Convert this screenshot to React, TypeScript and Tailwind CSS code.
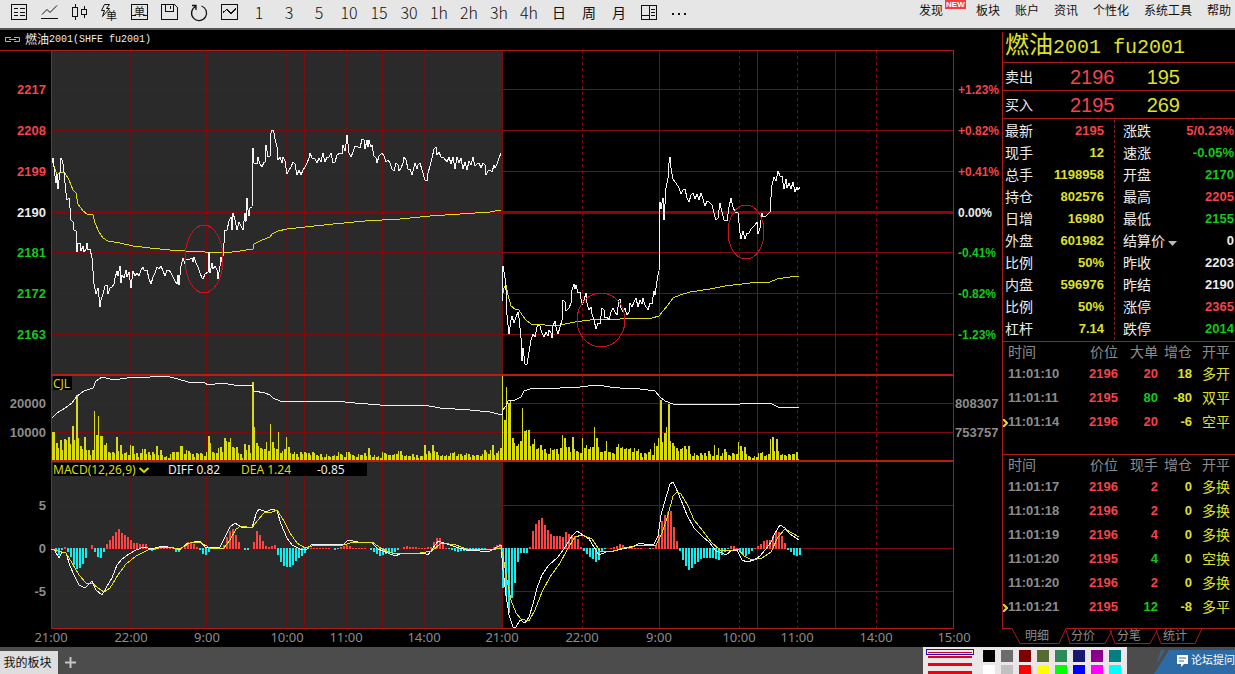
import { useState } from 'react'
import type { ReactNode } from 'react'

const SANS = "[font-family:'Liberation_Sans','Noto_Sans_CJK_SC',sans-serif]"
const SONG = "[font-family:'Liberation_Mono','Noto_Sans_CJK_SC',monospace]"
const UI = "[font-family:'Noto_Sans','Noto_Sans_CJK_SC',sans-serif]"
const NARROW = "[font-family:'Liberation_Sans_Narrow','Noto_Sans_CJK_SC',sans-serif]"

const RED = 'text-[#f5434b]'
const GREEN = 'text-[#12c91c]'
const YELLOW = 'text-[#dfe02c]'
const WHITE = 'text-[#ececec]'

type Stat = { label: string; value: string; color: string; menu?: boolean }
type Trade = { time: string; price: string; lots: string; lotsColor?: string; delta: string; kind: string; last?: boolean }

const leftStats: Stat[] = [
  { label: '最新', value: '2195', color: RED },
  { label: '现手', value: '12', color: YELLOW },
  { label: '总手', value: '1198958', color: YELLOW },
  { label: '持仓', value: '802576', color: YELLOW },
  { label: '日增', value: '16980', color: YELLOW },
  { label: '外盘', value: '601982', color: YELLOW },
  { label: '比例', value: '50%', color: YELLOW },
  { label: '内盘', value: '596976', color: YELLOW },
  { label: '比例', value: '50%', color: YELLOW },
  { label: '杠杆', value: '7.14', color: YELLOW },
]

const rightStats: Stat[] = [
  { label: '涨跌', value: '5/0.23%', color: RED },
  { label: '速涨', value: '-0.05%', color: GREEN },
  { label: '开盘', value: '2170', color: GREEN },
  { label: '最高', value: '2205', color: RED },
  { label: '最低', value: '2155', color: GREEN },
  { label: '结算价', value: '0', color: WHITE, menu: true },
  { label: '昨收', value: '2203', color: WHITE },
  { label: '昨结', value: '2190', color: WHITE },
  { label: '涨停', value: '2365', color: RED },
  { label: '跌停', value: '2014', color: GREEN },
]

const bigTrades: Trade[] = [
  { time: '11:01:10', price: '2196', lots: '20', delta: '18', kind: '多开' },
  { time: '11:01:11', price: '2195', lots: '80', lotsColor: GREEN, delta: '-80', kind: '双平' },
  { time: '11:01:14', price: '2196', lots: '20', delta: '-6', kind: '空平', last: true },
]

const trades: Trade[] = [
  { time: '11:01:17', price: '2196', lots: '2', delta: '0', kind: '多换' },
  { time: '11:01:18', price: '2196', lots: '2', delta: '0', kind: '多换' },
  { time: '11:01:19', price: '2196', lots: '4', delta: '0', kind: '多换' },
  { time: '11:01:20', price: '2195', lots: '4', lotsColor: GREEN, delta: '0', kind: '空换' },
  { time: '11:01:20', price: '2196', lots: '2', delta: '0', kind: '多换' },
  { time: '11:01:21', price: '2195', lots: '12', lotsColor: GREEN, delta: '-8', kind: '多平', last: true },
]

// Chart series, in the units of the chart's viewBox
const price1 =
  '52,163 53,158 54,167 55,176 56,183 57,174 58,189 59,180 60,173 61,158 62,160 63,164 64,172 65,183 66,193 67,200 69,198 70,208 71,220 73,222 74,230 76,231 77,252 78,243 80,243 81,251 83,246 84,252 86,249 87,243 88,250 90,249 92,258 93,271 94,284 96,294 98,288 99,297 100,307 101,300 103,294 105,286 107,285 108,294 110,288 112,287 114,284 115,278 117,271 118,276 120,266 121,283 122,275 124,278 126,270 127,277 129,272 130,280 131,288 133,271 135,276 137,273 139,276 141,270 143,267 144,270 147,270 149,279 151,284 153,277 155,273 157,267 159,269 161,266 163,271 165,276 167,270 169,270 171,273 173,277 175,281 177,284 178,275 179,285 181,266 183,258 185,264 186,260 190,259 192,258 193,262 194,257 196,263 198,267 200,273 202,278 203,279 205,274 208,272 209,252 210,273 212,263 213,269 215,266 217,270 218,279 220,266 221,257 222,262 223,256 224,243 225,230 227,230 229,221 231,217 232,230 233,213 235,220 237,230 239,222 240,224 243,230 245,213 246,222 247,198 248,210 249,216 250,208 252,207 253,148 254,163 257,164 258,157 260,164 262,167 264,162 265,162 266,145 268,157 270,156 271,133 272,130 273,130 274,133 275,139 277,147 278,160 280,157 282,163 283,157 285,161 287,174 289,170 291,167 293,162 295,164 297,175 299,170 301,175 303,170 305,167 307,163 309,158 310,153 312,158 315,159 317,163 319,158 321,162 323,153 325,162 327,157 329,157 331,153 333,163 335,162 337,155 340,153 342,154 343,145 345,151 346,144 347,135 349,153 351,157 353,152 355,146 358,147 360,148 362,139 364,140 365,149 367,140 368,147 369,140 371,147 372,145 374,156 376,158 377,163 379,156 382,153 384,156 386,162 388,160 390,163 392,169 394,171 396,163 398,165 399,171 401,168 403,163 404,157 406,160 408,169 410,169 412,175 414,167 415,163 417,169 418,165 420,163 422,170 425,180 427,181 428,173 430,166 432,158 434,149 436,147 437,155 439,152 441,157 444,158 447,162 449,157 451,164 453,157 455,169 457,157 459,163 461,158 463,169 465,162 467,170 469,161 471,165 473,157 475,166 477,164 479,163 481,168 483,163 485,165 486,175 488,171 490,170 492,172 494,165 495,168 497,164 499,158 501,153'
const price2 =
  '502,302 503,266 504,272 505,278 506,290 507,315 509,334 511,320 512,316 514,323 516,317 518,312 519,318 521,338 522,361 523,348 525,364 527,364 529,352 531,340 533,334 535,337 537,327 538,325 540,326 542,333 544,337 546,332 548,336 549,330 551,333 552,338 553,326 555,321 556,327 558,334 560,327 562,320 563,300 565,302 566,311 569,308 571,303 572,290 574,284 575,289 576,285 578,293 580,292 582,305 584,300 586,293 587,303 589,310 591,307 592,314 594,320 596,329 598,323 600,324 602,308 604,310 605,318 607,317 609,320 611,312 613,308 615,312 617,315 619,300 620,299 621,308 623,312 625,308 627,315 629,312 630,303 632,307 634,302 636,298 638,307 640,300 642,304 643,298 645,305 648,310 650,303 652,304 654,291 655,295 657,281 658,275 659,272 660,202 661,209 662,203 663,198 664,220 666,188 668,178 669,163 670,157 671,168 673,179 676,183 679,188 681,194 683,190 685,189 687,198 689,202 691,195 693,193 695,199 697,194 699,200 701,193 703,199 705,206 707,201 709,202 712,205 714,213 716,220 718,218 720,203 722,212 724,220 727,221 729,207 731,198 733,207 735,212 738,213 739,223 740,233 741,239 743,231 745,239 747,233 749,233 751,229 753,227 755,225 757,222 758,234 760,228 762,213 763,217 766,216 770,212 771,197 772,185 774,177 776,181 778,171 780,176 782,176 784,189 786,179 787,188 789,183 791,189 793,182 795,192 797,187 798,190 800,187'
const average1 =
  '52,160 53,163 57,175 61,172 65,173 69,180 73,190 76,193 78,204 83,211 87,214 93,215 95,223 99,232 103,238 108,241 120,243 133,246 150,248 170,250 185,251 205,252 225,253 240,251 253,249 254,244 262,240 270,237 272,234 278,231 287,229 305,227 333,224 365,221 400,219 430,216 460,214 490,212 501,210'
const average2 =
  '502,297 504,288 506,285 508,295 511,306 515,309 519,310 522,315 526,320 531,324 545,325 560,325 575,322 590,320 620,319 652,318 659,316 663,311 668,305 673,298 680,295 690,292 710,289 725,286 750,283 770,282 777,279 790,277 799,276'
const openInterest =
  '52,418 57,413 65,408 72,403 77,396 84,391 93,388 96,381 102,377 110,379 120,379 135,377 150,377 158,376 170,377 178,379 188,382 205,383 208,385 222,383 240,386 252,385 254,391 265,393 270,395 273,398 280,401 310,402 335,401 355,403 380,405 393,406 424,405 440,408 470,410 490,412 502,415 503,410 506,406 508,401 515,400 521,397 524,391 530,389 560,388 580,387 597,385 610,387 620,388 640,389 655,391 660,397 665,401 673,404 700,404 730,405 750,403 770,403 778,407 785,407 799,407'
const diff =
  '51,549 54,549 59,558 62,552 66,553 70,566 75,577 79,585 85,588 92,581 96,590 102,595 106,588 112,578 117,565 122,559 129,554 136,550 144,547 152,549 162,546 174,548 180,550 186,544 194,542 200,541 206,548 220,547 225,537 230,527 235,523 241,527 252,528 256,514 259,509 266,512 272,509 277,511 281,524 287,538 292,545 300,549 306,550 312,544 335,544 344,544 348,540 358,542 372,543 378,549 388,553 395,556 400,554 410,553 424,553 428,555 433,548 438,541 444,543 456,547 466,550 480,551 490,551 501,545 503,570 506,595 509,615 513,627 516,627 520,620 525,623 529,617 533,604 537,588 542,575 548,566 558,557 564,549 572,536 577,531 583,535 589,539 594,547 599,555 606,552 614,551 622,549 632,547 640,543 648,545 654,544 658,536 661,515 664,504 667,494 670,484 673,482 676,488 681,500 687,515 694,528 702,536 710,543 716,551 722,553 726,555 732,550 737,550 742,560 747,562 754,560 760,556 766,549 771,542 775,533 780,525 785,528 790,534 799,540'
const dea =
  '51,549 62,552 66,553 72,563 79,575 86,583 92,583 98,588 104,592 110,588 118,575 126,564 136,556 148,550 165,547 180,549 190,543 200,542 210,548 224,548 230,540 236,529 241,526 252,528 258,520 264,513 272,512 277,510 284,521 290,533 297,543 305,548 312,546 322,545 340,546 350,543 372,542 382,549 392,553 404,554 420,553 432,551 441,543 456,545 466,549 490,550 501,548 503,556 507,580 511,600 516,613 521,619 529,621 535,610 542,592 550,577 560,563 567,550 575,537 582,535 592,539 600,551 610,552 624,548 640,545 656,545 662,533 668,515 673,496 677,492 681,494 688,506 694,520 703,531 711,542 720,550 728,551 738,549 744,556 752,560 762,558 771,552 778,537 785,529 792,533 799,537'

// One bar every two units, first bar at x = 52
const volume = [
  28, 28, 17, 12, 20, 10, 21, 20, 23, 16, 34, 20, 65, 22, 14, 11, 23, 10, 10, 5, 10, 49, 25, 44, 24, 24, 15, 17, 8, 7, 8, 7,
  23, 9, 15, 6, 7, 8, 5, 15, 14, 6, 7, 3, 7, 11, 11, 6, 8, 5, 8, 6, 14, 5, 10, 5, 3, 4, 2, 6, 8, 8, 8, 8, 14, 14, 6, 10, 9,
  7, 6, 3, 7, 6, 7, 6, 4, 8, 24, 17, 8, 7, 7, 12, 13, 8, 22, 19, 18, 22, 13, 12, 13, 7, 6, 2, 16, 10, 15, 7, 78, 33, 17, 14,
  12, 11, 11, 18, 9, 36, 18, 12, 11, 28, 7, 9, 11, 23, 13, 7, 6, 8, 6, 3, 8, 6, 8, 7, 7, 5, 8, 7, 5, 4, 6, 3, 3, 6, 4, 3, 4,
  5, 4, 8, 6, 5, 3, 8, 8, 6, 5, 4, 3, 6, 5, 5, 7, 4, 12, 5, 3, 5, 3, 4, 2, 8, 7, 6, 5, 5, 5, 6, 6, 9, 9, 5, 4, 5, 4, 4, 6,
  3, 5, 2, 4, 4, 15, 6, 9, 7, 15, 9, 8, 5, 4, 5, 4, 5, 4, 7, 7, 8, 4, 6, 6, 4, 5, 7, 6, 3, 5, 4, 5, 5, 4, 6, 10, 8, 6, 10,
  15, 5, 7, 9, 12, 84, 40, 73, 57, 60, 22, 17, 14, 16, 19, 52, 29, 30, 30, 14, 16, 21, 11, 12, 15, 10, 11, 7, 6, 12, 10, 11,
  11, 6, 12, 25, 22, 13, 13, 8, 23, 11, 9, 8, 7, 22, 12, 15, 11, 13, 13, 33, 22, 13, 8, 8, 9, 19, 8, 8, 7, 6, 13, 16, 12, 13,
  11, 12, 11, 12, 8, 12, 9, 11, 7, 3, 7, 6, 8, 11, 5, 17, 14, 22, 60, 18, 27, 33, 56, 19, 17, 14, 12, 9, 11, 12, 14, 11, 14,
  6, 4, 7, 5, 4, 7, 5, 7, 4, 9, 6, 4, 15, 5, 12, 4, 7, 11, 8, 5, 4, 7, 6, 6, 18, 14, 9, 13, 6, 4, 3, 2, 4, 3, 7, 7, 8, 4, 5,
  6, 21, 23, 9, 21, 9, 5, 6, 5, 4, 6, 5, 6, 6, 8, 1,
]

const macdShape: [number, number][] = [
  [52, 0], [57, -7], [60, -8], [62, 3], [64, 2], [66, -3], [70, -9], [73, -17], [77, -22], [81, -18], [86, -8], [88, 0],
  [91, 4], [93, 0], [95, -8], [99, -11], [102, -8], [104, 0], [106, 5], [111, 12], [118, 20], [122, 15], [128, 11],
  [132, 6], [140, 5], [146, 5], [148, 0], [151, -3], [155, -2], [160, 2], [172, 1], [175, -4], [179, -4], [182, 2],
  [187, 7], [192, 6], [196, 2], [199, -2], [203, -8], [207, -6], [210, 0], [222, 1], [225, 10], [229, 18], [232, 20],
  [236, 12], [239, 4], [242, -2], [247, -2], [252, 2], [255, 16], [257, 19], [260, 12], [264, 3], [270, 2], [274, 4],
  [276, -2], [278, -12], [283, -18], [288, -20], [292, -17], [297, -10], [302, -8], [306, -2], [310, 1], [330, 1],
  [335, -3], [340, 2], [347, 4], [352, 1], [365, 1], [372, -3], [378, -8], [384, -6], [395, -4], [400, 0], [405, 3],
  [420, 1], [430, 2], [434, 8], [437, 12], [441, 9], [444, 2], [450, -2], [456, -4], [470, -2], [480, -1], [490, 0],
  [495, 3], [501, 6], [502, -40], [505, -48], [508, -65], [511, -50], [514, -35], [516, -18], [519, -5], [526, -5],
  [529, 2], [532, 18], [536, 27], [541, 31], [545, 22], [551, 13], [558, 13], [562, 12], [565, 17], [570, 14],
  [576, 13], [580, 2], [583, -3], [590, -10], [597, -15], [600, -5], [604, -1], [612, 1], [620, 5], [624, 2], [640, 1],
  [650, -1], [655, 4], [658, 14], [661, 28], [665, 36], [670, 38], [673, 22], [677, 3], [679, -3], [682, -12],
  [686, -20], [689, -23], [694, -16], [702, -10], [712, -10], [718, -12], [722, -6], [726, -2], [731, 4], [735, 2],
  [739, -4], [744, -9], [749, -5], [754, 1], [760, 5], [764, 9], [770, 9], [775, 18], [780, 16], [785, 3], [787, -2],
  [792, -6], [797, -9], [801, -6],
]

function macdAt(x: number) {
  const i = macdShape.findIndex(([px]) => px >= x)
  if (i <= 0) return 0
  const [x0, y0] = macdShape[i - 1]
  const [x1, y1] = macdShape[i]
  return Math.round(y0 + ((y1 - y0) * (x - x0)) / (x1 - x0))
}

const macdBars = Array.from({ length: 250 }, (_, i) => {
  const x = 52 + i * 3
  return { x, h: macdAt(x) }
})

const priceTicks = [
  { y: 90, price: '2217', pct: '+1.23%', fill: '#f5434b' },
  { y: 131, price: '2208', pct: '+0.82%', fill: '#f5434b' },
  { y: 172, price: '2199', pct: '+0.41%', fill: '#f5434b' },
  { y: 213, price: '2190', pct: '0.00%', fill: '#ececec' },
  { y: 253, price: '2181', pct: '-0.41%', fill: '#12c91c' },
  { y: 294, price: '2172', pct: '-0.82%', fill: '#12c91c' },
  { y: 335, price: '2163', pct: '-1.23%', fill: '#12c91c' },
]

const timeTicks: [number, string][] = [
  [51, '21:00'], [131, '22:00'], [207, '9:00'], [287, '10:00'], [346, '11:00'], [424, '14:00'], [502, '21:00'],
  [582, '22:00'], [659, '9:00'], [739, '10:00'], [797, '11:00'], [876, '14:00'], [954, '15:00'],
]

function Chart() {
  return (
    <svg viewBox="0 50 1002 597" className={`block w-full ${SANS}`} role="img" aria-label="燃油2001 分时图">
      <g shapeRendering="crispEdges" fill="none">
        <rect x="52" y="50" width="451" height="579" fill="#2a2a2a" />

        {/* grid */}
        <g stroke="#7d0a0e">
          {[90, 131, 172, 253, 294, 335, 404, 433, 506, 549, 592].map((y) => (
            <path key={y} d={`M52 ${y - 0.5}H953`} />
          ))}
          {[207, 305, 383, 503, 660, 758, 836].map((x) => (
            <path key={x} d={`M${x - 0.5} 50V628`} />
          ))}
          {[131, 287, 347, 425].map((x) => (
            <path key={x} d={`M${x - 0.5} 50V628`} stroke="#5c1719" />
          ))}
          {[583, 740, 798, 877].map((x) => (
            <path key={x} d={`M${x - 0.5} 50V628`} strokeDasharray="3 3" />
          ))}
        </g>
        <path d="M52 212.5H953" stroke="#8c0408" strokeWidth="3" />
        <path d="M0 50.5H953.5V628.5H51.5V50" stroke="#a81a1c" />
        <path d="M52 375H953M52 461H953" stroke="#b81c12" strokeWidth="2" />

        {/* volume */}
        <g fill="#d8da12">
          {volume.map((h, i) => (
            <rect key={i} x={52 + i * 2} y={460 - h} width={i % 2 ? 1 : 2} height={h} />
          ))}
        </g>
        <polyline points={openInterest} stroke="#f0f0f0" />

        {/* macd */}
        {macdBars.map(({ x, h }) => (
          <rect
            key={x}
            x={x}
            y={h > 0 ? 549 - h : 548}
            width="2"
            height={Math.abs(h)}
            fill={h > 0 ? '#ff4343' : '#12eeee'}
          />
        ))}
        <polyline points={diff} stroke="#f4f4f4" />
        <polyline points={dea} stroke="#e2e22a" />

        {/* price */}
        <polyline points={average1} stroke="#dcdc1e" />
        <polyline points={average2} stroke="#dcdc1e" />
        <polyline points={price1} stroke="#f4f4f4" />
        <polyline points={price2} stroke="#f4f4f4" />
        <g stroke="#c8141e">
          <ellipse cx="204" cy="259" rx="19" ry="34" />
          <ellipse cx="601" cy="320" rx="24" ry="27" />
          <ellipse cx="746" cy="232" rx="18" ry="27" />
        </g>
      </g>

      <g className="text-[13px] font-bold">
        {priceTicks.map((t) => (
          <g key={t.price} fill={t.fill}>
            <text x="46" y={t.y + 4} textAnchor="end">{t.price}</text>
            <text x="958" y={t.y + 4} className="text-[12px]">{t.pct}</text>
          </g>
        ))}
        <g fill="#8c8c8c">
          <text x="46" y="408" textAnchor="end">20000</text>
          <text x="46" y="437" textAnchor="end">10000</text>
          <text x="46" y="510" textAnchor="end">5</text>
          <text x="46" y="553" textAnchor="end">0</text>
          <text x="46" y="596" textAnchor="end">-5</text>
          <text x="955" y="408">808307</text>
          <text x="955" y="437">753757</text>
        </g>
      </g>

      <g className={`text-[12px] ${UI}`}>
        <rect x="53" y="376" width="19" height="14" fill="#000" />
        <text x="53" y="388" fill="#d8da12">CJL</text>
        <rect x="53" y="463" width="314" height="13" fill="#000" />
        <text x="53" y="474" fill="#d8da12">MACD(12,26,9)</text>
        <path d="M139.500 468l4.500 4 4.500-4" fill="none" stroke="#d8da12" strokeWidth="2" />
        <text x="168" y="474" fill="#ececec">DIFF 0.82</text>
        <text x="241" y="474" fill="#d8da12">DEA 1.24</text>
        <text x="317" y="474" fill="#ececec">-0.85</text>
      </g>

      <g className={`text-[13px] ${UI}`} fill="#8c8c8c" textAnchor="middle">
        {timeTicks.map(([x, t]) => (
          <text key={x} x={x} y="642">{t}</text>
        ))}
      </g>
    </svg>
  )
}

function Icon({ children }: { children: ReactNode }) {
  return (
    <svg viewBox="0 0 20 20" className="size-5" fill="none" stroke="#111" shapeRendering="crispEdges">
      {children}
    </svg>
  )
}

const tools: { name: string; icon: ReactNode }[] = [
  {
    name: '报价',
    icon: <path d="M2.500 2.500h15v15h-15zM5 6.500h4M11 6.500h5M5 10.500h4M11 10.500h5M5 13.500h4M11 13.500h5" />,
  },
  { name: '分时', icon: <path d="M2 16.500h17M3 12.500l5-5 3 3 7-7" shapeRendering="auto" /> },
  {
    name: 'K线',
    icon: <path d="M3.500 5.500h5v9h-5zM6.500 2v3M6.500 15v3M12.500 7.500h5v5h-5zM15.500 4v3M15.500 13v3" />,
  },
  {
    name: '闪电下单',
    icon: (
      <>
        <path d="M5.500 2.500h5l-3 4h3l-7 8 2-6h-3z" shapeRendering="auto" />
        <text x="7" y="18" fontSize="11" fill="#111" stroke="none">单</text>
      </>
    ),
  },
  {
    name: '下单',
    icon: (
      <>
        <path d="M2.500 2.500h16v15h-16zM3 13.500h4M14 13.500h4" />
        <text x="5" y="14" fontSize="11" fill="#111" stroke="none">单</text>
      </>
    ),
  },
  { name: '保存', icon: <path d="M2.500 2.500h13l3 3v12h-16zM6.500 3v6h8V3M11.500 4v3" /> },
  {
    name: '刷新',
    icon: <path d="M6.500 4.500a7.500 7.500 0 1 0 6-.500M3 3.500h4V8" strokeWidth="1.300" shapeRendering="auto" />,
  },
  { name: '指标', icon: <path d="M2.500 2.500h16v15h-16zM4 10.500l4-3 4 4 5-5" /> },
]

const periods = ['1', '3', '5', '10', '15', '30', '1h', '2h', '3h', '4h']
const longPeriods = ['日', '周', '月']
const menus = ['板块', '账户', '资讯', '个性化', '系统工具', '帮助']

function Toolbar() {
  return (
    <header className={`flex h-[30px] justify-between border-b-2 border-[#555] bg-[#e6e6e6] text-[#111] ${NARROW}`}>
      <div className="flex h-6 items-center pl-1">
        {tools.map((t) => (
          <button key={t.name} aria-label={t.name} className="flex w-[30px] justify-center">
            <Icon>{t.icon}</Icon>
          </button>
        ))}
        {periods.map((p) => (
          <button key={p} className="h-6 w-[30px] text-center text-base leading-[22px] font-light">{p}</button>
        ))}
        {longPeriods.map((p) => (
          <button key={p} className="w-[30px] text-center text-sm leading-6">{p}</button>
        ))}
        <button aria-label="布局" className="flex w-[30px] justify-center">
          <Icon>
            <path d="M2.500 3.500h15v14h-15zM10.500 4v13M3 13.500h7M12 7.500h4M12 10.500h4M12 13.500h4" />
          </Icon>
        </button>
        <button aria-label="更多" className="flex w-[30px] justify-center gap-1 pt-1">
          <span className="size-[2px] bg-[#111]" />
          <span className="size-[2px] bg-[#111]" />
          <span className="size-[2px] bg-[#111]" />
        </button>
      </div>
      <nav className="flex h-5 items-center gap-[15px] pr-1 text-xs">
        <a href="#discover" className="relative mr-[18px]">
          发现
          <span className={`absolute -top-[2px] left-[26px] h-[9px] w-[21px] bg-[#ef3e46] text-center text-[8px] leading-[9px] font-bold text-white ${SANS}`}>
            NEW
          </span>
        </a>
        {menus.map((m) => (
          <a key={m} href="#menu">{m}</a>
        ))}
      </nav>
    </header>
  )
}

function StatList({ rows }: { rows: Stat[] }) {
  return (
    <dl>
      {rows.map((r, i) => (
        <div key={i} className="flex h-[22px] items-center justify-between">
          <dt className={`flex items-center text-sm ${WHITE}`}>
            {r.label}
            {r.menu && (
              <button aria-label="选择结算价" className="ml-[3px] mt-1">
                <svg viewBox="0 0 9 5" className="h-[5px] w-[9px] fill-[#b8b8b8]">
                  <path d="M0 0h9L4.500 5z" />
                </svg>
              </button>
            )}
          </dt>
          <dd className={`text-[13px] font-bold ${r.color}`}>{r.value}</dd>
        </div>
      ))}
    </dl>
  )
}

function TradeTable({ lotsLabel, rows }: { lotsLabel: string; rows: Trade[] }) {
  return (
    <table className="w-full table-fixed text-right text-[13px] font-bold">
      <thead>
        <tr className="h-5 text-sm text-[#8c8c8c]">
          <th className="w-[57px] pl-[5px] text-left font-normal">时间</th>
          <th className="w-[58px] font-normal">价位</th>
          <th className="w-10 font-normal">{lotsLabel}</th>
          <th className="w-[34px] font-normal">增仓</th>
          <th className="pr-[5px] font-normal">开平</th>
        </tr>
      </thead>
      <tbody>
        {rows.map((r, i) => (
          <tr key={i} className={`h-6 ${YELLOW}`}>
            <td className="text-left whitespace-nowrap text-[#8c8c8c]">
              <svg viewBox="0 0 5 8" className="inline-block h-2 w-[5px]" fill="none" stroke="#dfe02c" strokeWidth="2">
                {r.last && <path d="M0 0l4 4-4 4" />}
              </svg>
              {r.time}
            </td>
            <td className={RED}>{r.price}</td>
            <td className={r.lotsColor ?? RED}>{r.lots}</td>
            <td>{r.delta}</td>
            <td className="pr-[5px] text-sm font-normal">{r.kind}</td>
          </tr>
        ))}
      </tbody>
    </table>
  )
}

function OrderRow({ label, price, size }: { label: string; price: string; size: string }) {
  return (
    <div className="flex h-7 items-center border-t border-[#a81a1c] pt-px pl-[2px] text-xl">
      <span className={`w-[65px] text-sm ${WHITE}`}>{label}</span>
      <span className={`w-11 text-right ${RED}`}>{price}</span>
      <span className={`w-[66px] text-right ${YELLOW}`}>{size}</span>
    </div>
  )
}

function QuotePanel() {
  const [tab, setTab] = useState('明细')
  return (
    <aside className="flex w-[233px] shrink-0 flex-col pt-[2px]">
      <div className="border-l border-[#a81a1c]">
        <h2 className={`h-[30px] pl-[2px] text-xl leading-[32px] whitespace-pre ${SONG} ${YELLOW}`}>
          <span className="text-2xl leading-[30px]">燃油</span>2001 fu2001
        </h2>
        <OrderRow label="卖出" price="2196" size="195" />
        <OrderRow label="买入" price="2195" size="269" />
        <div className="grid grid-cols-[112px_1fr] border-t border-[#a81a1c] py-px">
          <div className="border-r border-dashed border-[#8c1a1c] pr-[10px] pl-[2px]">
            <StatList rows={leftStats} />
          </div>
          <div className="pr-px pl-2">
            <StatList rows={rightStats} />
          </div>
        </div>
        <div className="h-[113px] border-t border-[#a81a1c]">
          <TradeTable lotsLabel="大单" rows={bigTrades} />
        </div>
        <div className="h-[174px] border-t border-[#a81a1c]">
          <TradeTable lotsLabel="现手" rows={trades} />
        </div>
      </div>
      <div className="relative">
        <svg viewBox="0 0 233 19" className="absolute inset-0 h-[19px] w-[233px]" fill="none" stroke="#a81a1c">
          <path d="M0 .5h10l8 15h39l7-15h169M64 2l4 13.500h35l7-13M108 2l5 13.500h35l7-13M154 2l5 13.500h34l7-15" />
        </svg>
        <div className="relative flex pl-[12px]">
          {['明细', '分价', '分笔', '统计'].map((t) => (
            <button
              key={t}
              aria-pressed={tab === t}
              onClick={() => setTab(t)}
              className="w-[46px] text-center text-xs leading-4 text-[#8c8c8c]"
            >
              {t}
            </button>
          ))}
        </div>
      </div>
    </aside>
  )
}

const swatches = [
  ['#000000', '#6c6c6c', '#800000', '#556b2f', '#2e8b57', '#191970', '#8b008b', '#008080'],
  ['#ffffff', '#c0c0c0', '#ff0000', '#ffff00', '#00ff00', '#0000ff', '#ff00ff', '#00ffff'],
]

function BottomBar() {
  return (
    <footer className="flex h-[27px] justify-between overflow-hidden bg-[#4c4c4c] text-xs">
      <div className="flex items-end">
        <button className="h-[23px] w-[58px] bg-[#dedede] pr-[3px] text-center text-[#111]">我的板块</button>
        <button aria-label="添加" className="flex h-[23px] w-6 items-center justify-center">
          <svg viewBox="0 0 11 11" className="size-[11px]" stroke="#c4c4c4" strokeWidth="2">
            <path d="M5.500 0v11M0 5.500h11" />
          </svg>
        </button>
      </div>
      <div className="flex">
        <div className="flex h-9 w-[204px] items-start gap-[9px] bg-[#ebe7e9] px-[3px] pt-[2px]">
          <div className="flex w-12 flex-col">
            <button aria-label="线宽 1" className="h-[6px] border border-[#1a10c0] p-px">
              <span className="block h-px bg-[#c00030]" />
            </button>
            <button aria-label="线宽 2" className="mx-[2px] mt-px h-[2px] bg-[#e8000c]" />
            <button aria-label="线宽 3" className="mx-[2px] mt-[5px] h-[3px] bg-[#f0000c]" />
            <button aria-label="线宽 4" className="mx-[2px] mt-[5px] h-1 bg-[#f0000c]" />
          </div>
          <div className="grid grid-cols-8 gap-x-[6px] gap-y-[3px] pt-px">
            {swatches.flat().map((c) => (
              <button key={c} aria-label={c} className="size-3" style={{ backgroundColor: c }} />
            ))}
          </div>
        </div>
        <a href="#forum" className="relative ml-[27px] flex w-[81px] items-center whitespace-nowrap text-white">
          <svg viewBox="0 0 81 27" className="absolute inset-0 h-full w-full" fill="#2d6ba6">
            <path d="M15 3h66v24H0z" />
            <path d="M7 3h4L2 18z" fill="#3d6388" />
          </svg>
          <svg viewBox="0 0 12 12" className="relative ml-[23px] mr-[2px] size-3 shrink-0" fill="#fff">
            <path d="M0 0h11v9H7l-3 3V9H0z" />
            <path d="M2 3h7M2 6h5" stroke="#2d6ba6" />
          </svg>
          <span className="relative text-[11px]">论坛提问</span>
        </a>
      </div>
    </footer>
  )
}

export default function App() {
  return (
    <div className={`min-h-screen bg-black ${SANS}`}>
      <Toolbar />
      <div className="flex">
        <main className="min-w-0 flex-1">
          <h1 className={`flex h-5 items-center text-[10px] leading-3 text-[#ececec] ${SONG}`}>
            <svg viewBox="0 0 17 6" className="mr-1 ml-1 h-[6px] w-[17px]" fill="none" stroke="#b0b0b0">
              <path d="M7 .5H1.500v4H7M10 .5h5.500v4H10M5 2.500h7" />
            </svg>
            <span className="pt-px text-xs leading-3">燃油</span>2001(SHFE fu2001)
          </h1>
          <Chart />
        </main>
        <QuotePanel />
      </div>
      <BottomBar />
    </div>
  )
}
